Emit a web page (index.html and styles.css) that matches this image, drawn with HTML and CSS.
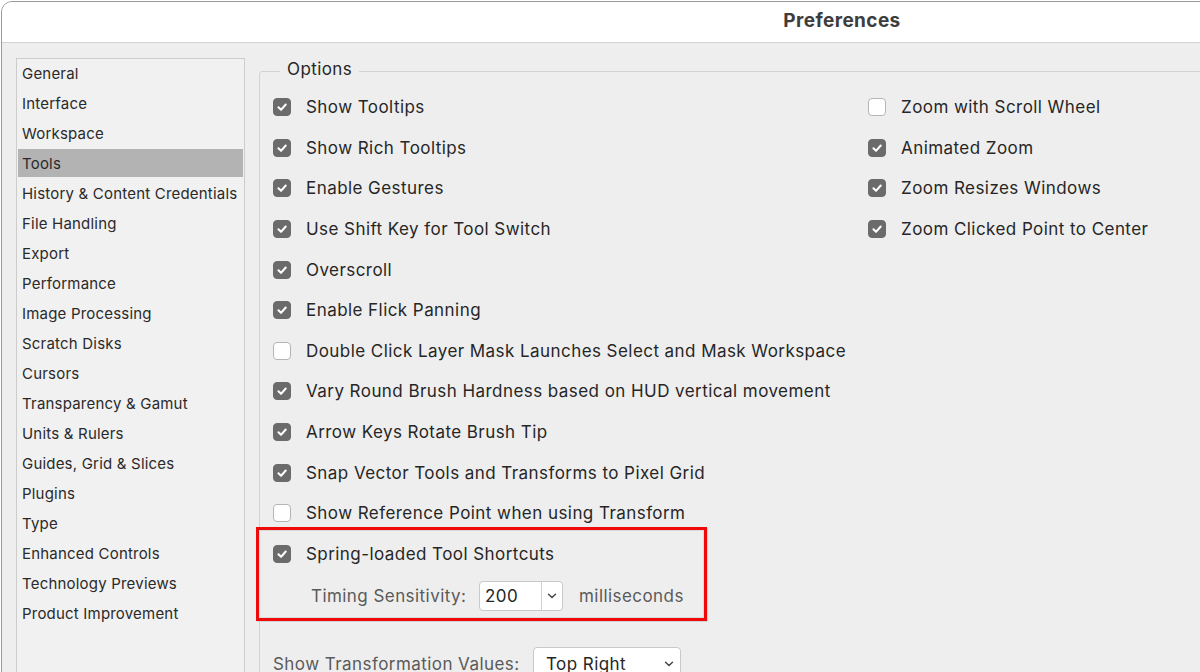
FILE: index.html
```html
<!DOCTYPE html>
<html>
<head>
<meta charset="utf-8">
<link rel="stylesheet" href="styles.css">
</head>
<body>
<div class="window">
  <div class="titlebar"><span class="title">Preferences</span></div>
  <div class="body">
    <nav class="sidebar">
      <div class="item">General</div>
      <div class="item">Interface</div>
      <div class="item">Workspace</div>
      <div class="item selected">Tools</div>
      <div class="item">History &amp; Content Credentials</div>
      <div class="item">File Handling</div>
      <div class="item">Export</div>
      <div class="item">Performance</div>
      <div class="item">Image Processing</div>
      <div class="item">Scratch Disks</div>
      <div class="item">Cursors</div>
      <div class="item">Transparency &amp; Gamut</div>
      <div class="item">Units &amp; Rulers</div>
      <div class="item">Guides, Grid &amp; Slices</div>
      <div class="item">Plugins</div>
      <div class="item">Type</div>
      <div class="item">Enhanced Controls</div>
      <div class="item">Technology Previews</div>
      <div class="item">Product Improvement</div>
    </nav>
    <main class="content">
      <fieldset class="group">
        <legend class="legend">Options</legend>
        <div class="cols">
          <div class="col">
            <label class="row"><span class="cb on"><svg viewBox="0 0 18 18"><path d="M5 9.3 L7.9 12.2 L13.2 6.2"/></svg></span>Show Tooltips</label>
            <label class="row"><span class="cb on"><svg viewBox="0 0 18 18"><path d="M5 9.3 L7.9 12.2 L13.2 6.2"/></svg></span>Show Rich Tooltips</label>
            <label class="row"><span class="cb on"><svg viewBox="0 0 18 18"><path d="M5 9.3 L7.9 12.2 L13.2 6.2"/></svg></span>Enable Gestures</label>
            <label class="row"><span class="cb on"><svg viewBox="0 0 18 18"><path d="M5 9.3 L7.9 12.2 L13.2 6.2"/></svg></span>Use Shift Key for Tool Switch</label>
            <label class="row"><span class="cb on"><svg viewBox="0 0 18 18"><path d="M5 9.3 L7.9 12.2 L13.2 6.2"/></svg></span>Overscroll</label>
            <label class="row"><span class="cb on"><svg viewBox="0 0 18 18"><path d="M5 9.3 L7.9 12.2 L13.2 6.2"/></svg></span>Enable Flick Panning</label>
            <label class="row"><span class="cb"></span>Double Click Layer Mask Launches Select and Mask Workspace</label>
            <label class="row"><span class="cb on"><svg viewBox="0 0 18 18"><path d="M5 9.3 L7.9 12.2 L13.2 6.2"/></svg></span>Vary Round Brush Hardness based on HUD vertical movement</label>
            <label class="row"><span class="cb on"><svg viewBox="0 0 18 18"><path d="M5 9.3 L7.9 12.2 L13.2 6.2"/></svg></span>Arrow Keys Rotate Brush Tip</label>
            <label class="row"><span class="cb on"><svg viewBox="0 0 18 18"><path d="M5 9.3 L7.9 12.2 L13.2 6.2"/></svg></span>Snap Vector Tools and Transforms to Pixel Grid</label>
            <label class="row"><span class="cb"></span>Show Reference Point when using Transform</label>
            <div class="spring">
              <div class="redframe"></div>
              <label class="row"><span class="cb on"><svg viewBox="0 0 18 18"><path d="M5 9.3 L7.9 12.2 L13.2 6.2"/></svg></span>Spring-loaded Tool Shortcuts</label>
              <div class="timing">
                <span class="dim label-timing">Timing Sensitivity:</span>
                <div class="combo">
                  <span class="combo-value">200</span>
                  <span class="combo-btn"><svg viewBox="0 0 10 6"><path d="M1.5 1.2 L5 4.6 L8.5 1.2"/></svg></span>
                </div>
                <span class="dim units">milliseconds</span>
              </div>
            </div>
          </div>
          <div class="col">
            <label class="row"><span class="cb"></span>Zoom with Scroll Wheel</label>
            <label class="row"><span class="cb on"><svg viewBox="0 0 18 18"><path d="M5 9.3 L7.9 12.2 L13.2 6.2"/></svg></span>Animated Zoom</label>
            <label class="row"><span class="cb on"><svg viewBox="0 0 18 18"><path d="M5 9.3 L7.9 12.2 L13.2 6.2"/></svg></span>Zoom Resizes Windows</label>
            <label class="row"><span class="cb on"><svg viewBox="0 0 18 18"><path d="M5 9.3 L7.9 12.2 L13.2 6.2"/></svg></span>Zoom Clicked Point to Center</label>
          </div>
        </div>
        <div class="transform">
          <span class="dim">Show Transformation Values:</span>
          <div class="select">
            <span>Top Right</span>
            <svg viewBox="0 0 10 6"><path d="M1.5 1.2 L5 4.6 L8.5 1.2"/></svg>
          </div>
        </div>
      </fieldset>
    </main>
  </div>
</div>
</body>
</html>
```

FILE: styles.css
```css
* { box-sizing: border-box; }
html, body {
  margin: 0;
  padding: 0;
  width: 1200px;
  height: 672px;
  overflow: hidden;
  background: #ffffff;
}
body {
  font-family: Inter, "Liberation Sans", Arial, sans-serif;
  color: #262626;
}
.window {
  margin: 1px 0 0 1px;
  width: 1682px;
  height: 800px;
  border: 1px solid #9a9a9a;
  border-radius: 11px 11px 0 0;
  background: #eeeeee;
  overflow: hidden;
}
.titlebar {
  height: 41px;
  background: #ffffff;
  border-bottom: 1px solid #d3d3d3;
  display: flex;
  align-items: center;
  justify-content: center;
}
.title {
  font-size: 19px;
  font-weight: 700;
  letter-spacing: 0.4px;
  color: #3d3d3d;
  margin-top: -3px;
}
.body {
  display: flex;
  align-items: flex-start;
  padding: 15px 0 0 14px;
  gap: 14px;
}
.sidebar {
  width: 229px;
  height: 700px;
  background: #f1f1f1;
  border: 1px solid #cccccc;
  padding-top: 0;
  flex: none;
}
.item {
  height: 28px;
  margin: 0 1px 2px 1px;
  padding-left: 4px;
  display: flex;
  align-items: center;
  font-size: 15px;
  letter-spacing: 0.2px;
  color: #2a2a2a;
}
.item.selected {
  background: #b3b3b3;
}
.content {
  flex: 1;
  padding-top: 3px;
}
.group {
  margin: 0;
  width: 1500px;
  height: 700px;
  border: 1px solid #d2d2d2;
  border-radius: 3px;
  padding: 6px 0 0 13px;
}
.legend {
  padding: 0 7px;
  margin-left: 7px;
  font-size: 17px;
  line-height: 20px;
  letter-spacing: 0.4px;
  color: #262626;
  position: relative;
  top: -2px;
}
.cols {
  display: grid;
  grid-template-columns: 595px auto;
}
.col {
  display: flex;
  flex-direction: column;
}
.row {
  height: 40.6px;
  display: flex;
  align-items: center;
  font-size: 17px;
  letter-spacing: 0.44px;
  white-space: nowrap;
}
.cb {
  width: 18px;
  height: 18px;
  border-radius: 4px;
  border: 1px solid #b5b5b5;
  background: #ffffff;
  margin-right: 15px;
  flex: none;
  display: flex;
}
.cb.on {
  background: #6b6b6b;
  border-color: #6b6b6b;
}
.cb svg {
  width: 16px;
  height: 16px;
}
.cb svg path {
  fill: none;
  stroke: #ffffff;
  stroke-width: 2.3;
  stroke-linecap: round;
  stroke-linejoin: round;
}
.spring {
  position: relative;
}
.redframe {
  position: absolute;
  left: -17px;
  top: -6.6px;
  width: 451px;
  height: 94px;
  border: 3px solid #ee0a0a;
  box-shadow: 1px 1px 0 #d4d4d4, inset 0 0 0 1px #dadada;
  pointer-events: none;
}
.timing {
  height: 44px;
  display: flex;
  align-items: center;
  padding-left: 38px;
  font-size: 17px;
  white-space: nowrap;
}
.dim {
  color: #5a5a5a;
  font-size: 17px;
  letter-spacing: 0.44px;
}
.label-timing {
  width: 168px;
}
.combo {
  width: 84px;
  height: 30px;
  display: flex;
  background: #ffffff;
  border: 1px solid #c9c9c9;
  border-radius: 4px;
}
.combo-value {
  width: 62px;
  border-right: 1px solid #d0d0d0;
  padding-left: 5px;
  display: flex;
  align-items: center;
  font-size: 17px;
  letter-spacing: 0.44px;
  color: #262626;
}
.combo-btn {
  flex: 1;
  display: flex;
  align-items: center;
  justify-content: center;
}
.combo-btn svg, .select svg {
  width: 10px;
  height: 6px;
}
.combo-btn svg path, .select svg path {
  fill: none;
  stroke: #444444;
  stroke-width: 1.4;
  stroke-linecap: round;
  stroke-linejoin: round;
}
.units {
  margin-left: 16px;
}
.transform {
  margin-top: 30px;
  height: 32px;
  display: flex;
  align-items: center;
  white-space: nowrap;
}
.transform .dim {
  width: 260px;
}
.select {
  width: 148px;
  height: 34px;
  background: #ffffff;
  border: 1px solid #c9c9c9;
  border-radius: 4px;
  display: flex;
  align-items: center;
  justify-content: space-between;
  padding: 0 6px 0 12px;
  font-size: 17px;
  letter-spacing: 0.44px;
  color: #262626;
}
```
